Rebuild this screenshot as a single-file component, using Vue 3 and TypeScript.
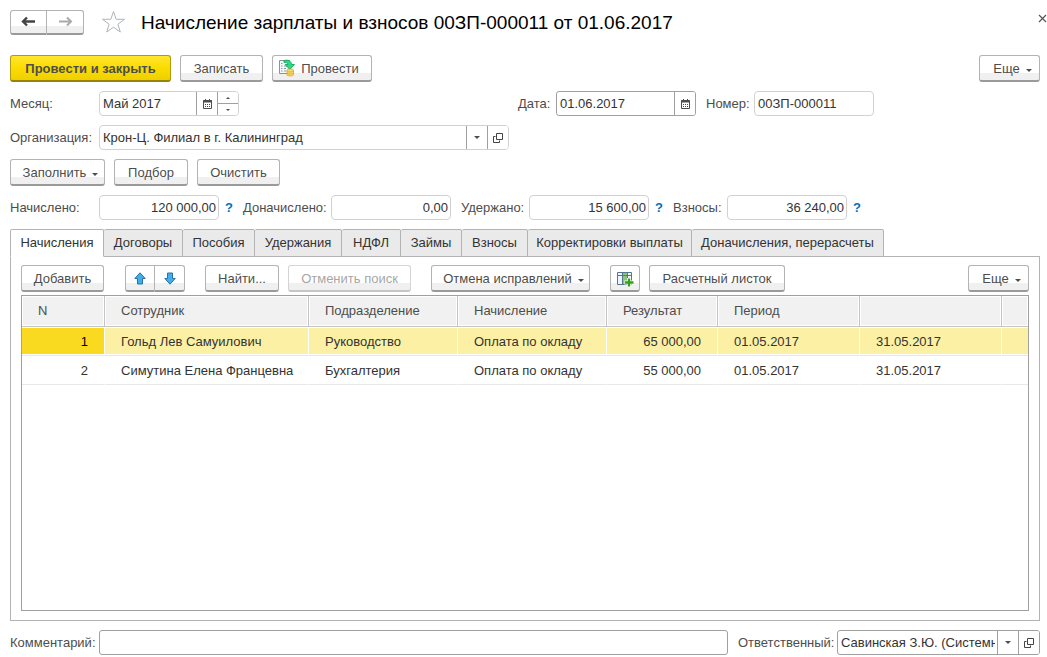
<script setup lang="ts">
import { ref } from 'vue'

interface Tab { id: string; title: string }
interface Row { n: number; employee: string; department: string; accrual: string; result: string; from: string; to: string }

const tabs: Tab[] = [
  { id: 'accruals', title: 'Начисления' },
  { id: 'contracts', title: 'Договоры' },
  { id: 'benefits', title: 'Пособия' },
  { id: 'deductions', title: 'Удержания' },
  { id: 'tax', title: 'НДФЛ' },
  { id: 'loans', title: 'Займы' },
  { id: 'fees', title: 'Взносы' },
  { id: 'corrections', title: 'Корректировки выплаты' },
  { id: 'recalc', title: 'Доначисления, перерасчеты' },
]
const activeTab = ref('accruals')

const rows: Row[] = [
  { n: 1, employee: 'Гольд Лев Самуилович', department: 'Руководство', accrual: 'Оплата по окладу', result: '65 000,00', from: '01.05.2017', to: '31.05.2017' },
  { n: 2, employee: 'Симутина Елена Францевна', department: 'Бухгалтерия', accrual: 'Оплата по окладу', result: '55 000,00', from: '01.05.2017', to: '31.05.2017' },
]
const selected = ref(1)

const month = ref('Май 2017')
const date = ref('01.06.2017')
const number = ref('00ЗП-000011')
const organization = ref('Крон-Ц. Филиал в г. Калининград')
const accrued = ref('120 000,00')
const extra = ref('0,00')
const withheld = ref('15 600,00')
const fees = ref('36 240,00')
const comment = ref('')
const responsible = ref('Савинская З.Ю. (Системн')
</script>

<template>
  <main class="page">
    <header class="header">
      <div class="pair nav">
        <button type="button" class="btn" aria-label="Назад">
          <svg width="15" height="11" viewBox="0 0 15 11"><path d="M6 1.500 2 5.500 6 9.500M2 5.500H14" fill="none" stroke="#444" stroke-width="2.4" /></svg>
        </button>
        <button type="button" class="btn" aria-label="Вперед">
          <svg width="15" height="11" viewBox="0 0 15 11"><path d="M9 1.500 13 5.500 9 9.500M13 5.500H1" fill="none" stroke="#aaa" stroke-width="2" /></svg>
        </button>
      </div>
      <button type="button" class="bare star" aria-label="В избранное">
        <svg width="25" height="24" viewBox="0 0 25 24"><path d="M12.5 1.5 15.2 9.3H23.5L16.9 14.2 19.3 22 12.5 17.2 5.7 22 8.1 14.2 1.5 9.3H9.8Z" fill="#fff" stroke="#b0b4b8" stroke-width="1" /></svg>
      </button>
      <h1>Начисление зарплаты и взносов 00ЗП-000011 от 01.06.2017</h1>
      <button type="button" class="bare close" aria-label="Закрыть">
        <svg width="9" height="9" viewBox="0 0 9 9"><path d="M1 1 8 8M8 1 1 8" stroke="#555" stroke-width="1.2" /></svg>
      </button>
    </header>

    <div class="bar commands">
      <button type="button" class="btn primary">Провести и закрыть</button>
      <button type="button" class="btn w-short">Записать</button>
      <button type="button" class="btn with-icon">
        <svg width="18" height="18" viewBox="0 0 18 18">
          <path d="M1.5 1.5H11.5V14.5H1.5Z" fill="#f4f8fb" stroke="#8294a3" />
          <path d="M3 4.5H4.5M3 7H4.5M3 9.5H4.5M3 12H4.5M6 7H9M6 9.5H8M6 12H8" stroke="#8798a6" />
          <path d="M6 1.500C10 .5 13.500 2 13.500 5.500H16.500L11.800 10.500 7.200 5.500H10C9.800 3.800 8.500 3.300 6 3.500Z" fill="#2bdc86" stroke="#0a9c50" stroke-width=".8" />
          <path d="M9 11C9 9.800 15.500 9.800 15.500 11V15.800C15.500 17.300 9 17.300 9 15.800Z" fill="#fbdc6a" stroke="#d9a528" stroke-width=".8" />
          <path d="M9 12C10 13.300 14.500 13.300 15.500 12M9 14.100C10 15.300 14.500 15.300 15.500 14.100" fill="none" stroke="#d9a528" stroke-width=".8" />
        </svg>
        Провести
      </button>
      <button type="button" class="btn more push">Еще<i class="caret"></i></button>
    </div>

    <div class="line">
      <div class="cell lead">
        <label class="label main-label" for="month">Месяц:</label>
        <div class="field month">
          <input id="month" v-model="month" type="text">
          <button type="button" class="tool" aria-label="Выбрать месяц">
            <svg width="9" height="10" viewBox="0 0 9 10"><path d="M.5 1.500H8.500V9.500H.5Z" fill="#fff" stroke="#4d4d4d" /><path d="M0 2.500H9" stroke="#4d4d4d" stroke-width="2" /><path d="M2.500 0V2M6.500 0V2" stroke="#4d4d4d" /><path d="M2 5.500H7M2 7.500H7" stroke="#4d4d4d" stroke-dasharray="1 1" /></svg>
          </button>
          <div class="spinner">
            <button type="button" aria-label="Следующий месяц"><i class="tri up"></i></button>
            <button type="button" aria-label="Предыдущий месяц"><i class="tri"></i></button>
          </div>
        </div>
      </div>
      <label class="label date-label" for="date">Дата:</label>
      <div class="field strong date">
        <input id="date" v-model="date" type="text">
        <button type="button" class="tool" aria-label="Выбрать дату">
          <svg width="9" height="10" viewBox="0 0 9 10"><path d="M.5 1.500H8.500V9.500H.5Z" fill="#fff" stroke="#4d4d4d" /><path d="M0 2.500H9" stroke="#4d4d4d" stroke-width="2" /><path d="M2.500 0V2M6.500 0V2" stroke="#4d4d4d" /><path d="M2 5.500H7M2 7.500H7" stroke="#4d4d4d" stroke-dasharray="1 1" /></svg>
        </button>
      </div>
      <label class="label number-label" for="number">Номер:</label>
      <div class="field sum"><input id="number" v-model="number" type="text"></div>
    </div>

    <div class="line">
      <div class="cell lead">
        <label class="label main-label" for="organization">Организация:</label>
        <div class="field grow">
          <input id="organization" v-model="organization" type="text">
          <button type="button" class="tool" aria-label="Выбрать организацию"><i class="tri big"></i></button>
          <button type="button" class="tool" aria-label="Открыть организацию">
            <svg width="10" height="10" viewBox="0 0 10 10"><path d="M3.500.5H9.500V6.500H3.500ZM2.500 3.500H.5V9.500H6.500V7.500" fill="none" stroke="#444" /></svg>
          </button>
        </div>
      </div>
    </div>

    <div class="bar fill">
      <button type="button" class="btn drop w-fill">Заполнить<i class="caret"></i></button>
      <button type="button" class="btn w-tiny">Подбор</button>
      <button type="button" class="btn w-short">Очистить</button>
    </div>

    <div class="line totals">
      <label class="label main-label" for="accrued">Начислено:</label>
      <div class="field sum"><input id="accrued" v-model="accrued" type="text" class="num"></div>
      <button type="button" class="bare help">?</button>
      <label class="label extra-label" for="extra">Доначислено:</label>
      <div class="field sum"><input id="extra" v-model="extra" type="text" class="num"></div>
      <label class="label withheld-label" for="withheld">Удержано:</label>
      <div class="field sum"><input id="withheld" v-model="withheld" type="text" class="num"></div>
      <button type="button" class="bare help">?</button>
      <label class="label fees-label" for="fees">Взносы:</label>
      <div class="field sum"><input id="fees" v-model="fees" type="text" class="num"></div>
      <button type="button" class="bare help">?</button>
    </div>

    <div class="tabs" role="tablist">
      <button
        v-for="tab in tabs" :key="tab.id" type="button" role="tab" class="tab"
        :class="{ active: tab.id === activeTab }" :aria-selected="tab.id === activeTab"
        @click="activeTab = tab.id"
      >{{ tab.title }}</button>
    </div>

    <section class="panel">
      <div class="bar tools">
        <button type="button" class="btn w-short">Добавить</button>
        <div class="pair moves">
          <button type="button" class="btn" aria-label="Вверх">
            <svg width="12" height="13" viewBox="0 0 12 13"><path d="M6 .8 11.200 6.500H8.500V12H3.500V6.500H.8Z" fill="#42aeee" stroke="#2872a6" /></svg>
          </button>
          <button type="button" class="btn" aria-label="Вниз">
            <svg width="12" height="13" viewBox="0 0 12 13"><path d="M6 12.200 11.200 6.500H8.500V1H3.500V6.500H.8Z" fill="#42aeee" stroke="#2872a6" /></svg>
          </button>
        </div>
        <button type="button" class="btn w-tiny">Найти...</button>
        <button type="button" class="btn w-cancel" disabled>Отменить поиск</button>
        <button type="button" class="btn drop undo">Отмена исправлений<i class="caret"></i></button>
        <button type="button" class="btn square" aria-label="Добавить колонку">
          <svg width="17" height="15" viewBox="0 0 17 15">
            <path d="M.5.5H14.500V12.500H.5Z" fill="#eef5fa" stroke="#56788f" />
            <path d="M5 1H10V12H5Z" fill="#8cc47e" />
            <path d="M1 3.500H14M5.500 1V12M10.500 1V12" stroke="#56788f" fill="none" />
            <path d="M12 6V15M7.500 10.500H16.500" stroke="#fff" stroke-width="4" />
            <path d="M12 6.500V14.500M8 10.500H16.500" stroke="#35a01b" stroke-width="2.400" />
          </svg>
        </button>
        <button type="button" class="btn w-slip">Расчетный листок</button>
        <button type="button" class="btn more push">Еще<i class="caret"></i></button>
      </div>

      <div class="grid">
        <table>
          <colgroup>
            <col class="c-n"><col class="c-name"><col class="c-mid"><col class="c-mid"><col class="c-sum"><col class="c-date"><col class="c-date"><col>
          </colgroup>
          <thead>
            <tr>
              <th>N</th><th>Сотрудник</th><th>Подразделение</th><th>Начисление</th><th>Результат</th><th>Период</th><th></th><th></th>
            </tr>
          </thead>
          <tbody>
            <tr v-for="row in rows" :key="row.n" :class="{ selected: row.n === selected }" @click="selected = row.n">
              <td class="right">{{ row.n }}</td>
              <td>{{ row.employee }}</td>
              <td>{{ row.department }}</td>
              <td>{{ row.accrual }}</td>
              <td class="right">{{ row.result }}</td>
              <td>{{ row.from }}</td>
              <td>{{ row.to }}</td>
              <td></td>
            </tr>
          </tbody>
        </table>
      </div>
    </section>

    <footer class="line footer">
      <label class="label main-label" for="comment">Комментарий:</label>
      <div class="field strong grow"><input id="comment" v-model="comment" type="text"></div>
      <label class="label resp-label" for="responsible">Ответственный:</label>
      <div class="field strong responsible">
        <input id="responsible" v-model="responsible" type="text">
        <button type="button" class="tool" aria-label="Выбрать ответственного"><i class="tri big"></i></button>
        <button type="button" class="tool" aria-label="Открыть ответственного">
          <svg width="10" height="10" viewBox="0 0 10 10"><path d="M3.500.5H9.500V6.500H3.500ZM2.500 3.500H.5V9.500H6.500V7.500" fill="none" stroke="#444" /></svg>
        </button>
      </div>
    </footer>
  </main>
</template>

<style>
body { margin: 0; background: #fff; }
</style>

<style scoped>
* { box-sizing: border-box; }
.page {
  display: flex;
  flex-direction: column;
  min-height: 100vh;
  padding: 9px 7px 2px 10px;
  font: 13px/16px "Liberation Sans", Arial, sans-serif;
  color: #4d4d4d;
}
button, input { font: inherit; color: inherit; margin: 0; }
button { padding: 0; cursor: pointer; white-space: nowrap; }
svg { display: block; flex: none; }

.header { display: flex; align-items: center; height: 26px; margin-bottom: 20px; }
h1 { margin: 0 auto 0 15px; padding-top: 2px; font-size: 19px; line-height: 24px; font-weight: 400; color: #000; white-space: nowrap; }
.bare { border: 0; background: none; }
.star { margin-left: 17px; }
.close { align-self: flex-start; padding: 5px 0 0; margin-right: -7px; width: 9px; }

.btn {
  display: flex;
  align-items: center;
  justify-content: center;
  height: 27px;
  padding: 2px 0 0;
  border: 1px solid #b3b3b3;
  border-bottom: 2px solid #9a9a9a;
  border-radius: 3px;
  background: linear-gradient(#fff 70%, #f0f0f0 70%);
}
.btn:disabled { color: #a6a6a6; border-color: #d4d4d4; border-bottom-color: #c6c6c6; }
.btn.primary {
  width: 161px;
  font-weight: 700;
  border-color: #b39b10;
  border-bottom-color: #978206;
  background: linear-gradient(#ffe62e, #fbdc00 50%, #efd000);
}
.with-icon { width: 100px; gap: 5px; padding-right: 7px; }
.with-icon svg { margin-top: -2px; }
.w-tiny { width: 74px; }
.w-short { width: 83px; }
.w-fill { width: 95px; }
.w-cancel { width: 123px; }
.w-slip { width: 136px; }
.more { width: 61px; }
.drop, .more { padding-left: 6px; }
.caret, .tri {
  width: 0;
  height: 0;
  border: 3px solid transparent;
  border-top-color: #4d4d4d;
  border-bottom: 0;
}
.caret { margin-left: 6px; margin-top: 2px; }
.tri { border-width: 2px; border-bottom: 0; }
.tri.up { border: 2px solid transparent; border-top: 0; border-bottom-color: #4d4d4d; }
.tri.big { border-width: 3px; border-bottom: 0; }
.pair { display: flex; }
.pair .btn { padding: 0; }
.pair .btn:first-child { border-radius: 3px 0 0 3px; }
.pair .btn:last-child { border-radius: 0 3px 3px 0; border-left: 0; }
.nav .btn { width: 37px; height: 25px; }
.moves .btn { width: 30px; }
.push { margin-left: auto; }

.bar { display: flex; gap: 9px; }
.commands, .fill { margin-bottom: 9px; }

.line { display: flex; align-items: center; margin-bottom: 9px; }
.cell { display: flex; align-items: center; }
.lead { width: 499px; }
.label { white-space: nowrap; flex: none; }
.main-label { width: 89px; }
.extra-label { width: 88px; }
.date-label { width: 47px; padding-left: 9px; }
.number-label { width: 58px; padding-left: 10px; }
.withheld-label { width: 78px; padding-left: 10px; }
.fees-label { width: 54px; }
.resp-label { width: 109px; padding-left: 10px; }

.field {
  display: flex;
  height: 25px;
  border: 1px solid #d2d2d2;
  border-radius: 4px;
  background: #fff;
  overflow: hidden;
}
.strong { border-color: #a0a0a0; border-radius: 3px; }
.field input {
  flex: 1;
  min-width: 0;
  width: 0;
  padding: 0 2px 0 3px;
  border: 0;
  outline: 0;
  background: none;
  color: #333;
}
.field .num { text-align: right; }
.grow { flex: 1; }
.month, .date { width: 140px; }
.sum { width: 120px; }
.responsible { width: 203px; }
.tool {
  display: flex;
  align-items: center;
  justify-content: center;
  width: 21px;
  border: 0;
  border-left: 1px solid #a0a0a0;
  background: #fff;
}
.spinner { display: flex; flex-direction: column; width: 21px; border-left: 1px solid #a0a0a0; }
.spinner button { flex: 1; display: flex; align-items: center; justify-content: center; border: 0; background: #fff; }
.spinner button:last-child { border-top: 1px solid #a0a0a0; }
.help { width: 24px; padding: 0 4px 0 0; color: #0070ba; font-weight: 700; }

.tabs {
  display: grid;
  grid-template-columns: 94px 79px 72px 87px 59px 61px 66px 164px 192px;
  margin-bottom: -1px;
}
.tab {
  height: 28px;
  border: 1px solid #b3b3b3;
  border-left-width: 0;
  border-radius: 2px 2px 0 0;
  background: #eaeaea;
  color: #333;
}
.tab:first-child { border-left-width: 1px; }
.tab.active { position: relative; background: #fff; border-bottom-color: #fff; }

.panel {
  flex: 1;
  display: flex;
  flex-direction: column;
  padding: 8px 10px 9px;
  margin-bottom: 9px;
  border: 1px solid #b3b3b3;
}
.tools { margin-bottom: 3px; }
.moves { margin: 0 11px 0 12px; }
.undo { width: 159px; margin: 0 11px; }
.square { width: 30px; }
.grid { flex: 1; border: 1px solid #a0a0a0; }
table { width: 100%; table-layout: fixed; border-collapse: separate; border-spacing: 0; }
.c-n { width: 83px; }
.c-name { width: 204px; }
.c-mid { width: 149px; }
.c-sum { width: 111px; }
.c-date { width: 142px; }
th, td { padding: 0 16px; text-align: left; white-space: nowrap; font-weight: 400; }
th {
  height: 31px;
  border-right: 1px solid #c4c4c4;
  border-bottom: 1px solid #c4c4c4;
  background: #f1f1f1;
  box-shadow: inset 0 0 0 1px #fff;
}
td { height: 29px; padding-top: 2px; color: #333; border-right: 1px solid #fff; border-bottom: 1px solid #e8e8e8; }
td.right { text-align: right; }
th:last-child, td:last-child { border-right: 0; }
.selected td { background: #fcf0a5; box-shadow: inset 0 1px #fff, inset 0 -1px #fff; }
.selected td:first-child { background: #fada20; color: #000; }
.footer { margin-bottom: 0; }
</style>
